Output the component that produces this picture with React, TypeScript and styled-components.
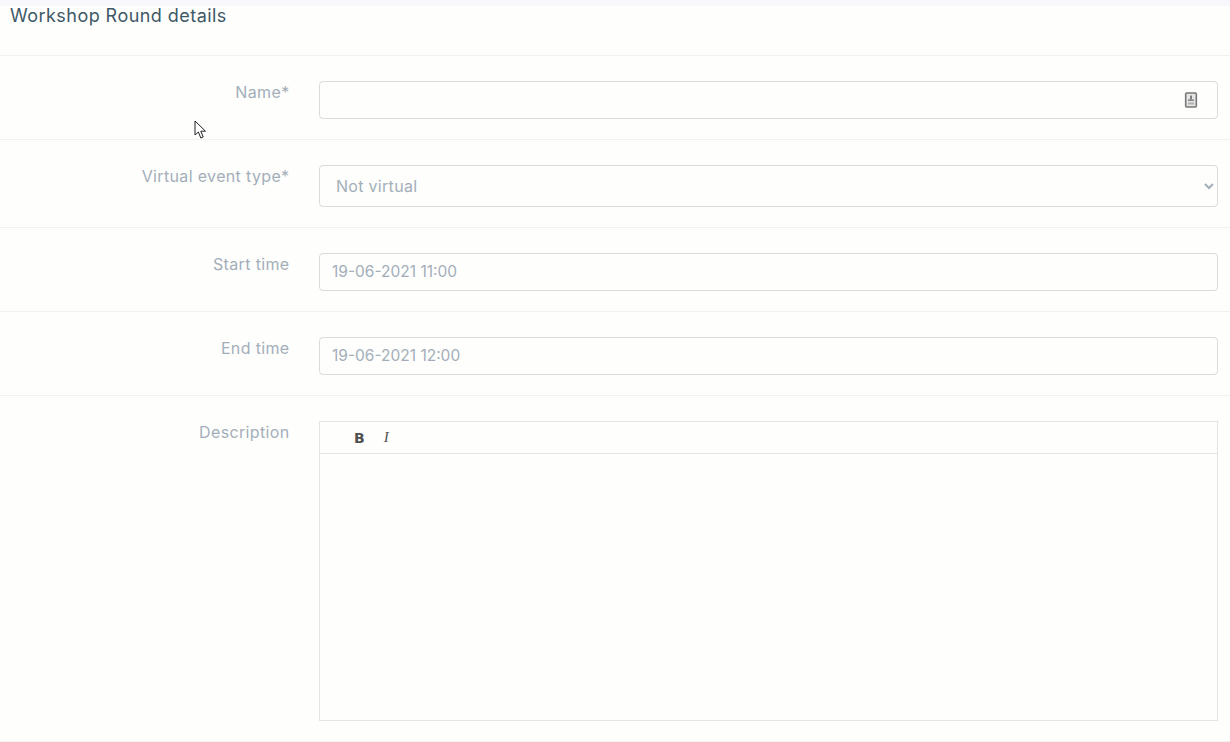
import React from 'react';
import styled, { createGlobalStyle } from 'styled-components';

const GlobalStyle = createGlobalStyle`
  html, body {
    margin: 0;
    padding: 0;
    background: #fefefd;
  }
  * { box-sizing: border-box; }
`;

const Page = styled.div`
  position: relative;
  width: 1230px;
  height: 742px;
  overflow: hidden;
  background: #fefefd;
  font-family: Inter, "Open Sans", sans-serif;
`;

const TopStrip = styled.div`
  height: 6px;
  background: #f8f8fc;
`;

const Heading = styled.div`
  height: 50px;
  padding: 0 0 0 10px;
  border-bottom: 1px solid #f1f1f0;
  font-size: 18px;
  letter-spacing: 0.45px;
  line-height: 20px;
  color: #3f5866;
`;

const Row = styled.div`
  display: flex;
  padding: 25px 12px 20px 0;
  border-bottom: 1px solid #f1f1f0;
`;

const Label = styled.label`
  width: 289.5px;
  flex: none;
  margin-right: 29.5px;
  text-align: right;
  font-size: 16px;
  letter-spacing: 0.35px;
  line-height: 22px;
  color: #a3aeb9;
`;

const InputWrap = styled.div`
  position: relative;
  flex: 1;
`;

const TextInput = styled.input`
  display: block;
  width: 100%;
  height: 38px;
  padding: 0 12px 2px;
  border: 1px solid #dadbdc;
  border-radius: 4px;
  background: #fefefd;
  font: inherit;
  font-size: 15.5px;
  color: #a3aeb9;
  outline: none;
`;

const Select = styled.select`
  display: block;
  width: 100%;
  height: 42px;
  padding: 0 12px;
  border: 1px solid #dadbdc;
  border-radius: 4px;
  background: #fefefd;
  font: inherit;
  font-size: 16px;
  letter-spacing: 0.3px;
  color: #a3aeb9;
  outline: none;
`;

const FieldIcon = styled.svg`
  position: absolute;
  top: 11px;
  right: 20px;
`;

const Editor = styled.div`
  flex: 1;
  height: 300px;
  border: 1px solid #e4e4e4;
`;

const EditorBar = styled.div`
  display: flex;
  align-items: center;
  gap: 19px;
  height: 32px;
  padding-left: 34px;
  border-bottom: 1px solid #e4e4e4;
`;

const EditorButton = styled.span<{ $italic?: boolean }>`
  font-family: ${p => (p.$italic ? '"Liberation Serif", serif' : '"DejaVu Sans", sans-serif')};
  font-size: ${p => (p.$italic ? '15px' : '14px')};
  font-weight: ${p => (p.$italic ? 400 : 700)};
  font-style: ${p => (p.$italic ? 'italic' : 'normal')};
  color: #505050;
  line-height: 1;
`;

const Cursor = styled.svg`
  position: absolute;
  left: 194px;
  top: 120px;
`;

const App: React.FC = () => (
  <Page>
    <GlobalStyle />
    <TopStrip />
    <Heading>Workshop Round details</Heading>
    <Row>
      <Label>Name*</Label>
      <InputWrap>
        <TextInput readOnly value="" />
        <FieldIcon width="14" height="16" viewBox="0 0 14 16">
          <rect x="1.7" y="1" width="10.6" height="14" rx="1" fill="#e6e6e6" stroke="#777" strokeWidth="1.6" />
          <rect x="6.2" y="3.5" width="1.6" height="4" fill="#666" />
          <rect x="4" y="7.5" width="6" height="1.4" fill="#777" />
          <rect x="4" y="10.5" width="6" height="2" fill="#b0b0b0" />
        </FieldIcon>
      </InputWrap>
    </Row>
    <Row>
      <Label>Virtual event type*</Label>
      <InputWrap>
        <Select defaultValue="none">
          <option value="none">Not virtual</option>
        </Select>
      </InputWrap>
    </Row>
    <Row>
      <Label>Start time</Label>
      <InputWrap>
        <TextInput readOnly value="19-06-2021 11:00" />
      </InputWrap>
    </Row>
    <Row>
      <Label>End time</Label>
      <InputWrap>
        <TextInput readOnly value="19-06-2021 12:00" />
      </InputWrap>
    </Row>
    <Row>
      <Label>Description</Label>
      <Editor>
        <EditorBar>
          <EditorButton>B</EditorButton>
          <EditorButton $italic>I</EditorButton>
        </EditorBar>
      </Editor>
    </Row>
    <Cursor width="14" height="20" viewBox="0 0 14 20">
      <path d="M1 1 L1 15 L4.4 12 L6.8 18 L9.2 17 L6.8 11.2 L11.5 11.2 Z" fill="#fff" stroke="#222" strokeWidth="1" />
    </Cursor>
  </Page>
);

export default App;
